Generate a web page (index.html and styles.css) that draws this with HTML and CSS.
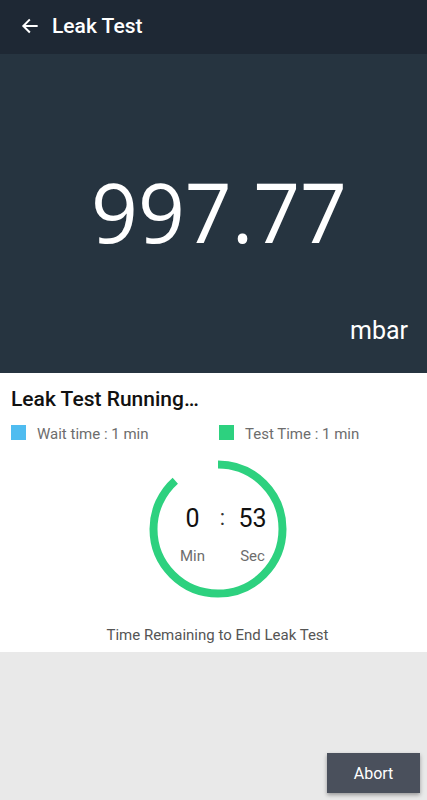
FILE: index.html
```html
<!DOCTYPE html>
<html>

<head>
    <link rel="stylesheet" href="styles.css">
</head>

<body>
    <div class="app">
        <!-- Top bar -->
        <div class="toolbar">
            <svg class="back" width="20" height="20" viewBox="0 0 24 24">
                <path d="M20 12H4.5M11 5l-7 7 7 7" fill="none" stroke="#fff" stroke-width="2.4" stroke-linecap="square" />
            </svg>
            <span class="toolbar-title">Leak Test</span>
        </div>

        <!-- Pressure reading -->
        <div class="reading">
            <div class="value">997.77</div>
            <div class="unit">mbar</div>
        </div>

        <!-- Status panel -->
        <div class="status">
            <h2>Leak Test Running…</h2>
            <div class="legend">
                <div class="legend-item">
                    <span class="swatch wait"></span>
                    <span>Wait time : 1 min</span>
                </div>
                <div class="legend-item">
                    <span class="swatch test"></span>
                    <span>Test Time : 1 min</span>
                </div>
            </div>

            <div class="timer">
                <svg class="ring" width="138" height="138" viewBox="0 0 138 138">
                    <circle cx="69" cy="69" r="64.5" fill="none" stroke="#2dd17f" stroke-width="8"
                        stroke-dasharray="358 405" transform="rotate(-90 69 69)" />
                </svg>
                <div class="clock">
                    <div class="clock-col">
                        <span class="num">0</span>
                        <span class="lbl">Min</span>
                    </div>
                    <div class="colon">:</div>
                    <div class="clock-col">
                        <span class="num">53</span>
                        <span class="lbl">Sec</span>
                    </div>
                </div>
            </div>

            <p class="remaining">Time Remaining to End Leak Test</p>
        </div>

        <div class="footer">
            <button class="abort">Abort</button>
        </div>
    </div>
</body>

</html>
```

FILE: styles.css
```css
body {
    margin: 0;
    font-family: Roboto, "Liberation Sans", sans-serif;
    background-color: #e9e9e9;
}

.app {
    display: flex;
    flex-direction: column;
    height: 800px;
}

.toolbar {
    height: 54px;
    background-color: #1e2834;
    display: flex;
    align-items: center;
    padding-left: 20px;
    box-sizing: border-box;
}

.back {
    margin-right: 12px;
    margin-top: -2px;
}

.toolbar-title {
    color: #fff;
    font-size: 21px;
    font-weight: 500;
    margin-top: -3px;
}

.reading {
    height: 319px;
    background-color: #263440;
    display: flex;
    flex-direction: column;
    box-sizing: border-box;
    padding: 0 19px 0 0;
}

.value {
    font-family: "Open Sans", sans-serif;
    color: #fff;
    font-size: 82px;
    text-align: center;
    padding-left: 30px;
    margin-top: 104px;
    line-height: 106px;
}

.unit {
    color: #fff;
    font-size: 25px;
    text-align: right;
    margin-top: 52px;
}

.status {
    background-color: #fff;
    height: 279px;
    box-sizing: border-box;
    padding: 14px 11px 0;
}

h2 {
    margin: 0;
    font-size: 21px;
    font-weight: 500;
    color: #111;
}

.legend {
    display: flex;
    margin-top: 14px;
}

.legend-item {
    display: flex;
    align-items: center;
    flex: 0 0 208px;
    color: #6d6d6d;
    font-size: 15px;
}

.swatch {
    width: 15px;
    height: 15px;
    margin-right: 11px;
    margin-top: -3px;
}

.swatch.wait {
    background-color: #4fbcf0;
}

.swatch.test {
    background-color: #2dd17f;
}

.timer {
    position: relative;
    width: 138px;
    height: 138px;
    margin: 17px auto 0;
    left: 4px;
}

.ring {
    display: block;
}

.clock {
    position: absolute;
    inset: 0;
    display: flex;
    align-items: flex-start;
    padding: 44px 0 0 24px;
}

.clock-col {
    display: flex;
    flex-direction: column;
    align-items: center;
    width: 40px;
}

.num {
    font-size: 25px;
    color: #111;
}

.lbl {
    font-size: 15px;
    color: #6d6d6d;
    margin-top: 14px;
}

.colon {
    font-size: 22px;
    color: #333;
    width: 20px;
    text-align: center;
    padding-top: 1px;
}

.remaining {
    text-align: center;
    color: #555;
    font-size: 15px;
    margin: 28px 0 0 8px;
}

.footer {
    flex: 1;
    display: flex;
    justify-content: flex-end;
    align-items: flex-end;
    padding: 0 7px 7px 0;
}

.abort {
    width: 93px;
    height: 40px;
    background-color: #4a505c;
    color: #fff;
    border: none;
    font-family: Roboto, sans-serif;
    font-size: 16px;
    box-shadow: 0 2px 4px rgba(0, 0, 0, 0.35);
}
```
